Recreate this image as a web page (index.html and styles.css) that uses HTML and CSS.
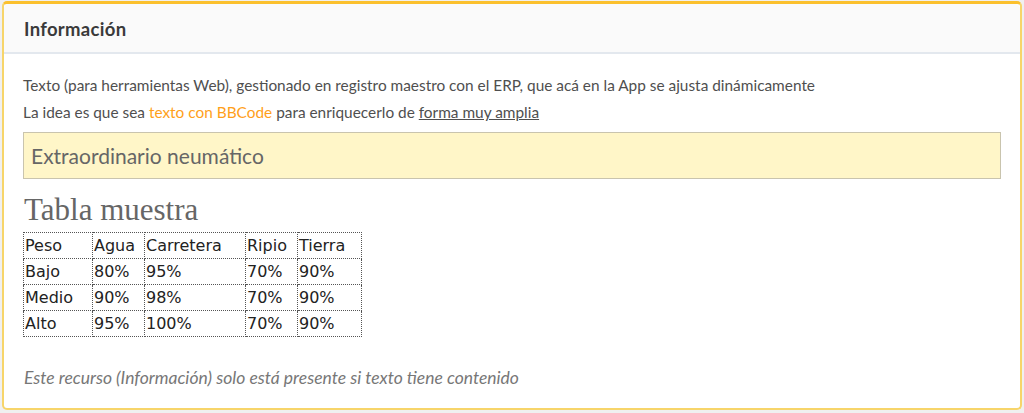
FILE: index.html
```html
<!DOCTYPE html>
<html lang="es">
<head>
    <meta charset="UTF-8">
    <meta name="viewport" content="width=device-width, initial-scale=1.0">
    <title>Información</title>
    <link rel="stylesheet" href="styles.css">
</head>
<body>
    <!-- Panel de información -->
    <div class="panel">
        <div class="panel-heading">Información</div>

        <div class="panel-body">
            <p class="line">Texto (para herramientas Web), gestionado en registro maestro con el ERP, que acá en la App se ajusta dinámicamente</p>
            <p class="line">La idea es que sea <span class="orange">texto con BBCode</span> para enriquecerlo de <u>forma muy amplia</u></p>

            <div class="highlight">Extraordinario neumático</div>

            <h2 class="table-title">Tabla muestra</h2>
            <table class="sample">
                <tr>
                    <td class="c1">Peso</td>
                    <td class="c2">Agua</td>
                    <td class="c3">Carretera</td>
                    <td class="c4">Ripio</td>
                    <td class="c5">Tierra</td>
                </tr>
                <tr>
                    <td>Bajo</td>
                    <td>80%</td>
                    <td>95%</td>
                    <td>70%</td>
                    <td>90%</td>
                </tr>
                <tr>
                    <td>Medio</td>
                    <td>90%</td>
                    <td>98%</td>
                    <td>70%</td>
                    <td>90%</td>
                </tr>
                <tr>
                    <td>Alto</td>
                    <td>95%</td>
                    <td>100%</td>
                    <td>70%</td>
                    <td>90%</td>
                </tr>
            </table>

            <p class="note">Este recurso (Información) solo está presente si texto tiene contenido</p>
        </div>
    </div>
</body>
</html>
```

FILE: styles.css
```css
body {
    margin: 0;
    padding: 1px 2px 3px 2px;
    background-color: #f0f0f0;
    font-family: Lato, "Open Sans", sans-serif;
    color: #4f4f4f;
}
.panel {
    background-color: #fff;
    border: 2px solid #f7d56a;
    border-top: 3px solid #fbc02d;
    border-radius: 5px;
    height: 409px;
    box-sizing: border-box;
}
.panel-heading {
    background-color: #fafafa;
    border-bottom: 2px solid #e3e8ee;
    border-radius: 5px 5px 0 0;
    height: 50px;
    box-sizing: border-box;
    padding: 14px 20px 0 20px;
    font-size: 18.5px;
    font-weight: bold;
    letter-spacing: 0.3px;
    color: #3a3a3a;
}
.panel-body {
    padding: 18px 19px 0 19px;
}
.line {
    margin: 0;
    font-size: 15.4px;
    line-height: 27px;
}
.orange {
    color: #ff9f1a;
}
.highlight {
    margin-top: 6px;
    height: 47px;
    box-sizing: border-box;
    background-color: #fff6c8;
    border: 1px solid #c9c4ae;
    padding: 10px 7px 0 7px;
    font-size: 21px;
    color: #666;
}
.table-title {
    margin: 16px 0 8px 1px;
    font-family: "Liberation Serif", "Times New Roman", serif;
    font-weight: normal;
    font-size: 31px;
    line-height: 29px;
    color: #666;
}
.sample {
    border-collapse: collapse;
    border: 1px dotted #555;
    font-family: "DejaVu Sans", Verdana, sans-serif;
    font-size: 16px;
    color: #222;
}
.sample td {
    border: 1px dotted #555;
    height: 25px;
    padding: 0 1px;
}
.c1 { width: 66px; }
.c2 { width: 49px; }
.c3 { width: 98px; }
.c4 { width: 49px; }
.c5 { width: 61px; }
.note {
    margin: 30px 0 0 1px;
    font-size: 17.5px;
    font-style: italic;
    color: #777;
}
```
